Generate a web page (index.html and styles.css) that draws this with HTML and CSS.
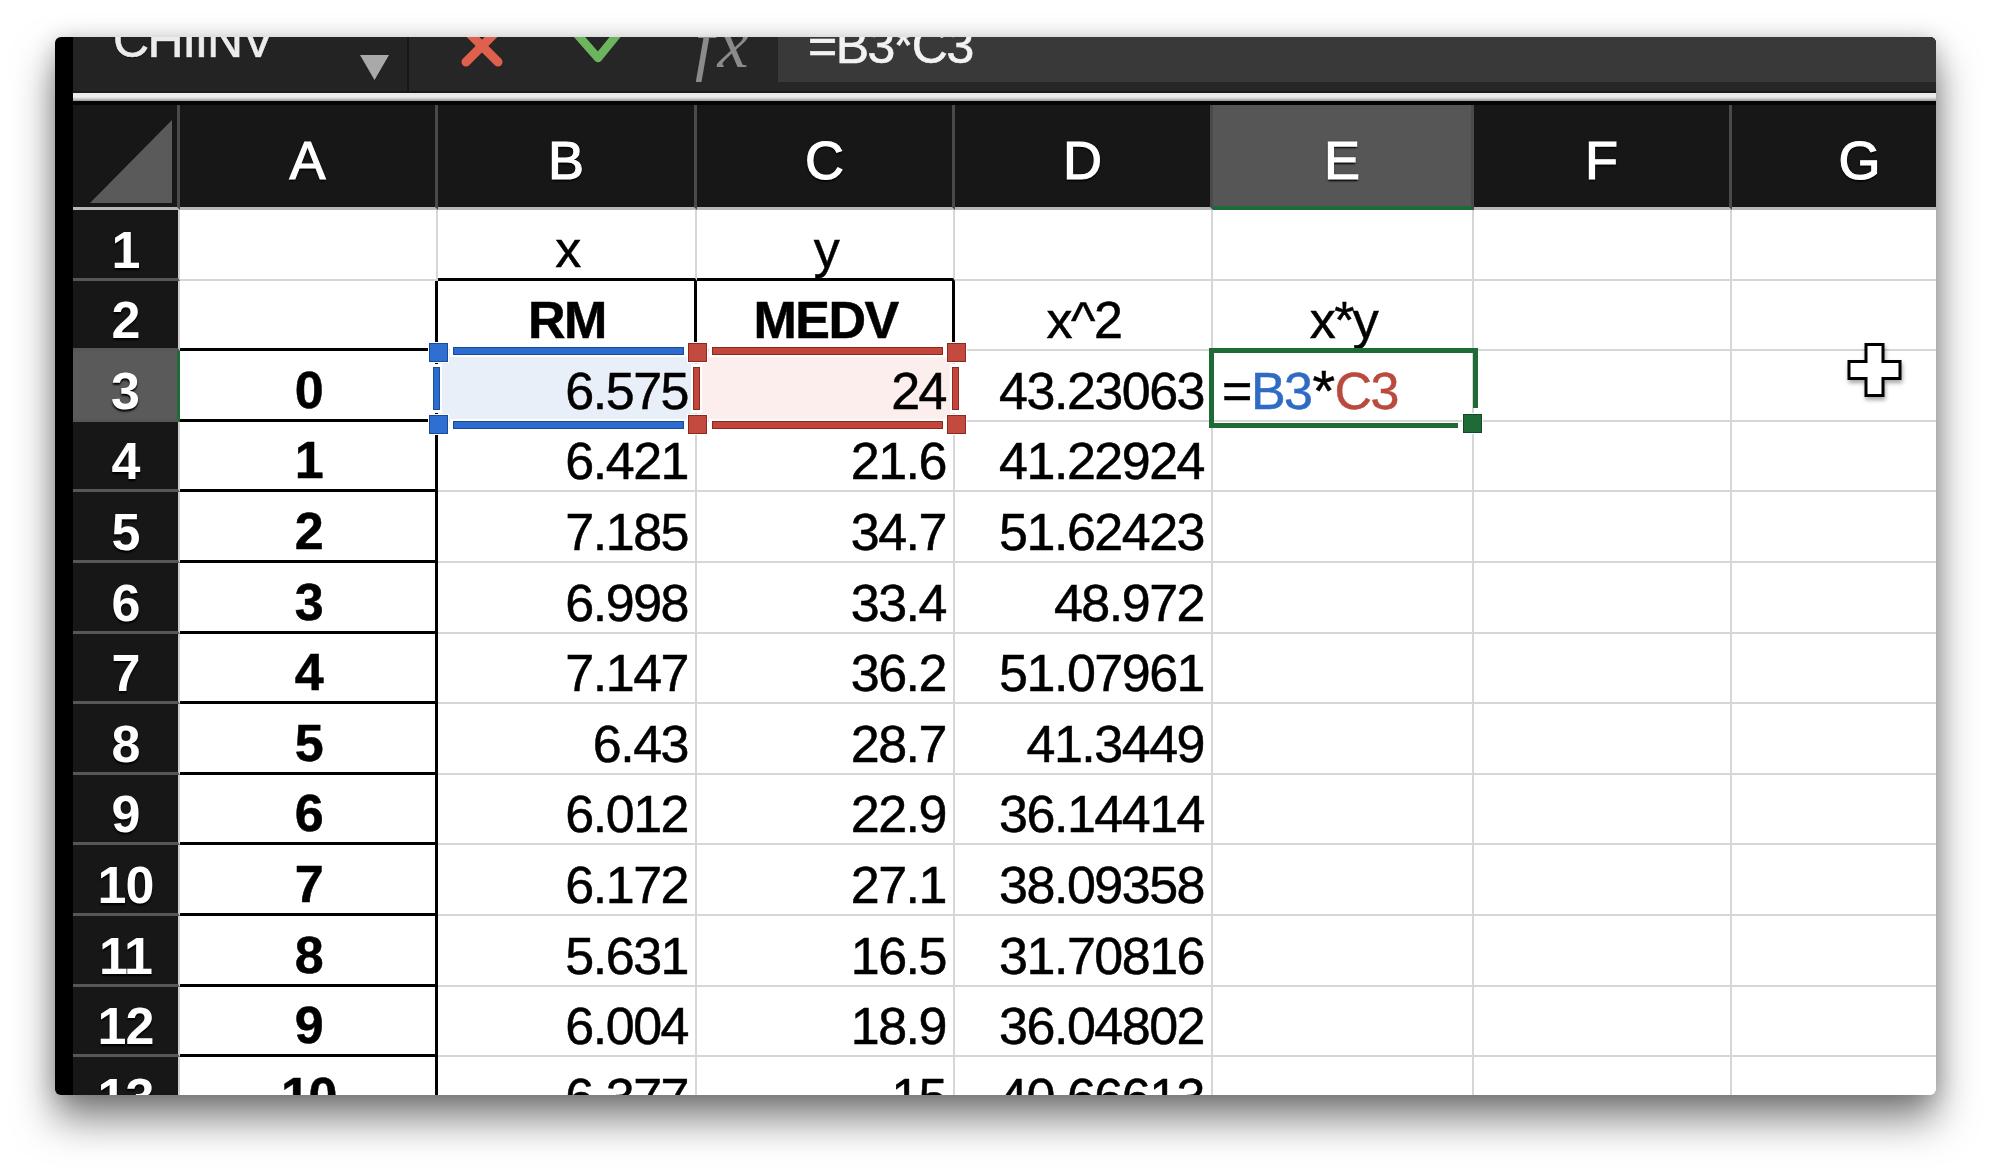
FILE: index.html
```html
<!DOCTYPE html>
<html>
<head>
<meta charset="utf-8">
<title>Sheet</title>
<link rel="stylesheet" href="styles.css">
</head>
<body>
<div class="window">
  <div class="toolbar">
    <div class="namebox">
      <span class="name">CHIINV</span>
      <svg class="dropdown" viewBox="0 0 29 25"><polygon points="0,0 29,0 14.5,25" fill="#a9a9a9"/></svg>
    </div>
    <div class="actions">
      <svg class="cancel" viewBox="0 0 46 46"><path d="M7 7 L39 39 M39 7 L7 39" stroke="#e0604e" stroke-width="9" stroke-linecap="round" fill="none"/></svg>
      <svg class="confirm" viewBox="0 0 54 40"><path d="M5 6 L27 31 L49 4" stroke="#6cb45d" stroke-width="8.5" stroke-linecap="round" stroke-linejoin="round" fill="none"/></svg>
      <span class="fx">fx</span>
    </div>
    <div class="formula"><span class="ftext">=B3*C3</span></div>
  </div>
  <div class="splitter"></div>
  <div class="sheet">
    <div class="grid">
      <div class="corner"><div class="tri"></div></div>
      <div class="ch">A</div><div class="ch">B</div><div class="ch">C</div><div class="ch">D</div><div class="ch sel">E</div><div class="ch">F</div><div class="ch">G</div>

      <div class="rh">1</div>
      <div class="c"></div><div class="c ctr kb">x</div><div class="c ctr kb">y</div><div class="c"></div><div class="c"></div><div class="c"></div><div class="c"></div>

      <div class="rh">2</div>
      <div class="c kr kb"></div><div class="c ctr b kr">RM</div><div class="c ctr b kr">MEDV</div><div class="c ctr">x^2</div><div class="c ctr">x*y</div><div class="c"></div><div class="c"></div>

      <div class="rh sel">3</div>
      <div class="c ctr b kr kb">0</div><div class="c tint-b">6.575</div><div class="c tint-r">24</div><div class="c">43.23063</div><div class="c lft">=<span class="rb">B3</span><span class="star">*</span><span class="rr">C3</span></div><div class="c"></div><div class="c"></div>

      <div class="rh">4</div>
      <div class="c ctr b kr kb">1</div><div class="c">6.421</div><div class="c">21.6</div><div class="c">41.22924</div><div class="c"></div><div class="c"></div><div class="c"></div>

      <div class="rh">5</div>
      <div class="c ctr b kr kb">2</div><div class="c">7.185</div><div class="c">34.7</div><div class="c">51.62423</div><div class="c"></div><div class="c"></div><div class="c"></div>

      <div class="rh">6</div>
      <div class="c ctr b kr kb">3</div><div class="c">6.998</div><div class="c">33.4</div><div class="c">48.972</div><div class="c"></div><div class="c"></div><div class="c"></div>

      <div class="rh">7</div>
      <div class="c ctr b kr kb">4</div><div class="c">7.147</div><div class="c">36.2</div><div class="c">51.07961</div><div class="c"></div><div class="c"></div><div class="c"></div>

      <div class="rh">8</div>
      <div class="c ctr b kr kb">5</div><div class="c">6.43</div><div class="c">28.7</div><div class="c">41.3449</div><div class="c"></div><div class="c"></div><div class="c"></div>

      <div class="rh">9</div>
      <div class="c ctr b kr kb">6</div><div class="c">6.012</div><div class="c">22.9</div><div class="c">36.14414</div><div class="c"></div><div class="c"></div><div class="c"></div>

      <div class="rh">10</div>
      <div class="c ctr b kr kb">7</div><div class="c">6.172</div><div class="c">27.1</div><div class="c">38.09358</div><div class="c"></div><div class="c"></div><div class="c"></div>

      <div class="rh">11</div>
      <div class="c ctr b kr kb">8</div><div class="c">5.631</div><div class="c">16.5</div><div class="c">31.70816</div><div class="c"></div><div class="c"></div><div class="c"></div>

      <div class="rh">12</div>
      <div class="c ctr b kr kb">9</div><div class="c">6.004</div><div class="c">18.9</div><div class="c">36.04802</div><div class="c"></div><div class="c"></div><div class="c"></div>

      <div class="rh">13</div>
      <div class="c ctr b kr kb">10</div><div class="c">6.377</div><div class="c">15</div><div class="c">40.66613</div><div class="c"></div><div class="c"></div><div class="c"></div>
    </div>

    <svg class="overlay" width="1863" height="990" viewBox="73 105 1863 990">
      <defs>
        <filter id="sh" x="-30%" y="-30%" width="160%" height="160%">
          <feDropShadow dx="1" dy="3" stdDeviation="2" flood-color="#000" flood-opacity="0.35"/>
        </filter>
      </defs>
      <g>
        <rect x="450" y="345" width="237" height="12" fill="#fff"/>
        <rect x="450" y="419" width="237" height="12" fill="#fff"/>
        <rect x="431" y="364" width="11" height="49" fill="#fff"/>
        <rect x="453.5" y="347.5" width="230" height="7" fill="#2c6bcf" stroke="#1b4a96" stroke-width="1"/>
        <rect x="453.5" y="421.5" width="230" height="7" fill="#2c6bcf" stroke="#1b4a96" stroke-width="1"/>
        <rect x="433.5" y="367.5" width="6" height="42" fill="#2c6bcf" stroke="#1b4a96" stroke-width="1"/>
        <rect x="428" y="342" width="21" height="21" fill="#fff"/>
        <rect x="428" y="414" width="21" height="21" fill="#fff"/>
        <rect x="429.5" y="343.5" width="18" height="18" fill="#2f6fd2" stroke="#1b4a96" stroke-width="1"/>
        <rect x="429.5" y="415.5" width="18" height="18" fill="#2f6fd2" stroke="#1b4a96" stroke-width="1"/>
      </g>
      <g>
        <rect x="709" y="345" width="237" height="12" fill="#fff"/>
        <rect x="709" y="419" width="237" height="12" fill="#fff"/>
        <rect x="691" y="364" width="11" height="49" fill="#fff"/>
        <rect x="950" y="364" width="11" height="49" fill="#fff"/>
        <rect x="712.5" y="347.5" width="230" height="7" fill="#c4463b" stroke="#8c2a22" stroke-width="1"/>
        <rect x="712.5" y="421.5" width="230" height="7" fill="#c4463b" stroke="#8c2a22" stroke-width="1"/>
        <rect x="693.5" y="367.5" width="6" height="42" fill="#c4463b" stroke="#8c2a22" stroke-width="1"/>
        <rect x="952.5" y="367.5" width="6" height="42" fill="#c4463b" stroke="#8c2a22" stroke-width="1"/>
        <rect x="687" y="342" width="21" height="21" fill="#fff"/>
        <rect x="687" y="414" width="21" height="21" fill="#fff"/>
        <rect x="946" y="342" width="21" height="21" fill="#fff"/>
        <rect x="946" y="414" width="21" height="21" fill="#fff"/>
        <rect x="688.5" y="343.5" width="18" height="18" fill="#c24a3f" stroke="#8c2a22" stroke-width="1"/>
        <rect x="688.5" y="415.5" width="18" height="18" fill="#c24a3f" stroke="#8c2a22" stroke-width="1"/>
        <rect x="947.5" y="343.5" width="18" height="18" fill="#c24a3f" stroke="#8c2a22" stroke-width="1"/>
        <rect x="947.5" y="415.5" width="18" height="18" fill="#c24a3f" stroke="#8c2a22" stroke-width="1"/>
      </g>
      <path d="M1475.5 408 V350.5 H1211.5 V425.5 H1458" fill="none" stroke="#1e6b37" stroke-width="5"/>
      <rect x="1462" y="413" width="21" height="21" fill="#fff"/>
      <rect x="1463.5" y="414.5" width="18" height="18" fill="#1e6b37" stroke="#114a24" stroke-width="1"/>
      <polygon filter="url(#sh)" points="1866,344.5 1883,344.5 1883,361.5 1900,361.5 1900,378.5 1883,378.5 1883,395.5 1866,395.5 1866,378.5 1849,378.5 1849,361.5 1866,361.5" fill="#fff" stroke="#000" stroke-width="3" stroke-linejoin="miter"/>
    </svg>
  </div>
</div>
</body>
</html>
```

FILE: styles.css
```css
* { box-sizing: border-box; }
html, body { margin: 0; padding: 0; background: #ffffff; }
body {
  width: 1992px;
  height: 1169px;
  overflow: hidden;
  font-family: "Liberation Sans", Arial, sans-serif;
}

.window {
  margin: 37px 0 0 55px;
  width: 1881px;
  height: 1058px;
  background: #000;
  padding-left: 18px;
  border-radius: 6px;
  overflow: hidden;
  display: flex;
  flex-direction: column;
  box-shadow: 0 24px 40px rgba(0,0,0,0.5), 0 2px 22px rgba(0,0,0,0.18);
}

/* ---------- formula toolbar ---------- */
.toolbar {
  height: 54px;
  flex: none;
  display: flex;
  background: #262626;
}
.namebox {
  width: 336px;
  flex: none;
  display: flex;
  align-items: flex-start;
  background: #232323;
  border-right: 2px solid #161616;
  padding-left: 40px;
}
.name {
  color: #ececec;
  font-size: 50px;
  line-height: 50px;
  letter-spacing: -1.5px;
  margin-top: -22px;
  text-shadow: 0 1px 1px #000;
  -webkit-text-stroke: 0.6px #ececec;
}
.dropdown {
  margin-left: auto;
  margin-right: 18px;
  margin-top: 18px;
  width: 29px;
  height: 25px;
}
.actions {
  width: 369px;
  flex: none;
  display: flex;
  align-items: flex-start;
}
.cancel {
  width: 46px;
  height: 46px;
  margin-left: 50px;
  margin-top: -14px;
}
.confirm {
  width: 54px;
  height: 40px;
  margin-left: 66px;
  margin-top: -10px;
}
.fx {
  margin-left: 70px;
  margin-top: -28px;
  font-family: "Liberation Serif", "Times New Roman", serif;
  font-style: italic;
  font-size: 70px;
  line-height: 70px;
  letter-spacing: 3px;
  color: #8b8b8b;
}
.formula {
  flex: 1;
  height: 45px;
  background: #393939;
  padding-left: 30px;
  overflow: hidden;
}
.ftext {
  display: block;
  color: #f2f2f2;
  font-size: 50px;
  line-height: 50px;
  letter-spacing: -1.5px;
  margin-top: -16px;
  -webkit-text-stroke: 0.6px #f2f2f2;
}

.splitter {
  height: 14px;
  flex: none;
  background: linear-gradient(#1a1a1a 0, #1a1a1a 2px, #e9e9e9 2px, #ededed 6px, #c4c4c4 8px, #9a9a9a 10px, #050505 10px, #050505 14px);
}

/* ---------- sheet ---------- */
.sheet {
  position: relative;
  flex: 1;
  overflow: hidden;
  background: #fff;
}
.grid {
  display: grid;
  grid-template-columns: 107px 258px 259px 258px 258px 261px 258px 258px;
  grid-template-rows: 105px repeat(13, 70.6px);
}

.corner {
  background: #171717;
  border-right: 3px solid #4a4a4a;
  border-bottom: 3px solid #b8b8b8;
  padding: 15px 0 0 17px;
}
.tri {
  width: 82px;
  height: 83px;
  background: #5a5a5a;
  clip-path: polygon(0 100%, 100% 100%, 100% 0);
}

.ch {
  background: #171717;
  color: #fff;
  font-size: 54px;
  line-height: 54px;
  display: flex;
  align-items: center;
  justify-content: center;
  padding-top: 8px;
  border-right: 3px solid #4a4a4a;
  border-bottom: 3px solid #b8b8b8;
  -webkit-text-stroke: 1.2px #fff;
  text-shadow: 0 2px 2px #000, 0 0 2px #000;
}
.ch.sel {
  background: #565656;
  border-bottom: 4px solid #1e6b37;
}

.rh {
  background: #171717;
  color: #fff;
  font-weight: bold;
  font-size: 52px;
  line-height: 52px;
  letter-spacing: -1px;
  display: flex;
  align-items: flex-end;
  justify-content: center;
  padding-bottom: 2px;
  border-right: 2px solid #cfcfcf;
  border-bottom: 3px solid #575757;
  text-shadow: 0 2px 2px #000;
}
.rh.sel {
  background: #5a5a5a;
  border-right: 3px solid #1e6b37;
}

.c {
  background: #fff;
  color: #000;
  font-size: 52px;
  line-height: 52px;
  letter-spacing: -1.5px;
  white-space: nowrap;
  overflow: hidden;
  display: flex;
  align-items: flex-end;
  justify-content: flex-end;
  padding: 0 7px 3px 9px;
  border-right: 2px solid #d6d6d6;
  border-bottom: 2px solid #d6d6d6;
  -webkit-text-stroke: 0.5px currentColor;
}
.ctr { justify-content: center; }
.lft { justify-content: flex-start; }
.b { font-weight: bold; }
.kr { border-right: 3px solid #000; }
.kb { border-bottom: 3px solid #000; }
.tint-b { background: #e9eff9; }
.tint-r { background: #fbeeed; }
.rb { color: #2f6bc4; }
.rr { color: #b94a3d; }
.star { font-size: 58px; padding: 0 1px; }

.overlay {
  position: absolute;
  top: 0;
  left: 0;
  pointer-events: none;
}
```
